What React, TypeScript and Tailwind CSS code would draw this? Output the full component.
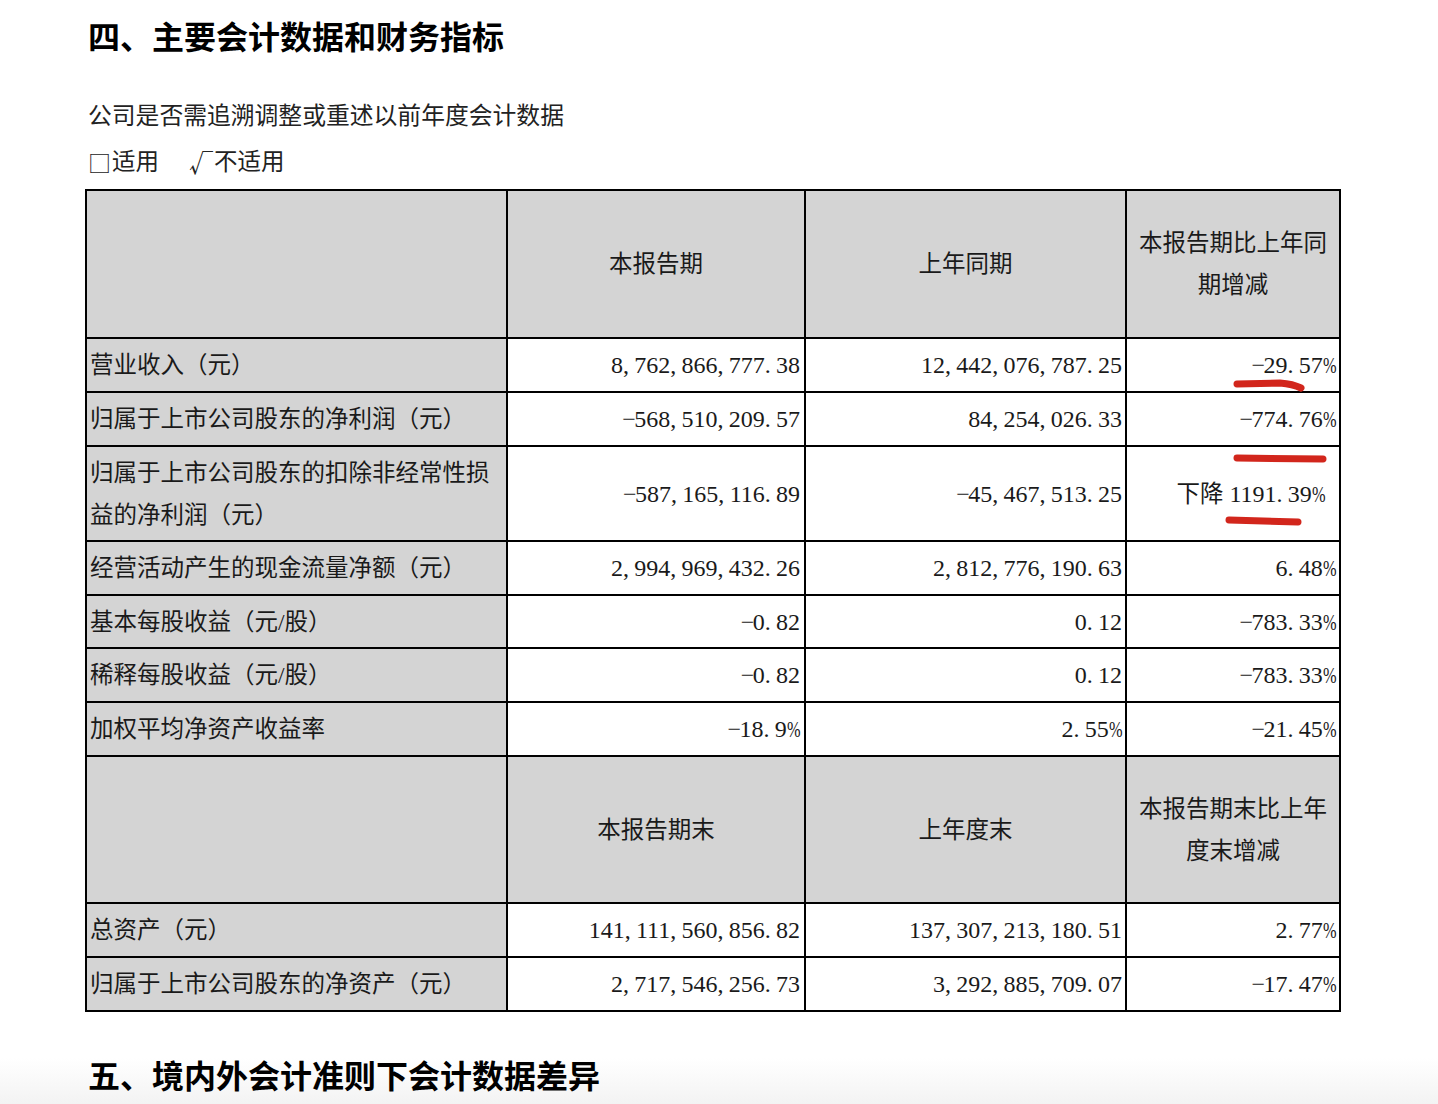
import React from "react";

const CJK = "font-['Liberation_Serif','Noto_Sans_CJK_SC',serif]";

function Num({ v }: { v: string }) {
  const parts = v.split("");
  return (
    <span className="font-['Liberation_Serif','Noto_Sans_CJK_SC',serif] whitespace-nowrap text-[24px]">
      {parts.map((c, i) => {
        if (c === "," || c === ".") {
          return (
            <span key={i} className="inline-block w-[0.47em] text-left">
              {c}
            </span>
          );
        }
        if (c === "-") {
          return (
            <span key={i} className="inline-block w-[0.5em] text-center">
              {"\u2212"}
            </span>
          );
        }
        if (c === "%") {
          return (
            <span key={i} className="inline-block w-[0.55em] overflow-visible">
              <span className="inline-block origin-left scale-x-[0.68]">%</span>
            </span>
          );
        }
        return <span key={i}>{c}</span>;
      })}
    </span>
  );
}

type Row = {
  label: React.ReactNode;
  a: string;
  b: string;
  c: React.ReactNode;
  h: string;
};

const rows1: Row[] = [
  { label: "营业收入（元）", a: "8,762,866,777.38", b: "12,442,076,787.25", c: <Num v="-29.57%" />, h: "h-[54px]" },
  { label: "归属于上市公司股东的净利润（元）", a: "-568,510,209.57", b: "84,254,026.33", c: <Num v="-774.76%" />, h: "h-[54px]" },
  {
    label: (
      <>
        归属于上市公司股东的扣除非经常性损
        <br />
        益的净利润（元）
      </>
    ),
    a: "-587,165,116.89",
    b: "-45,467,513.25",
    c: (
      <span className="pr-[11px]">
        <span className={CJK}>下降 </span>
        <Num v="1191.39%" />
      </span>
    ),
    h: "h-[95px]",
  },
  { label: "经营活动产生的现金流量净额（元）", a: "2,994,969,432.26", b: "2,812,776,190.63", c: <Num v="6.48%" />, h: "h-[54px]" },
  { label: "基本每股收益（元/股）", a: "-0.82", b: "0.12", c: <Num v="-783.33%" />, h: "h-[53px]" },
  { label: "稀释每股收益（元/股）", a: "-0.82", b: "0.12", c: <Num v="-783.33%" />, h: "h-[54px]" },
  { label: "加权平均净资产收益率", a: "-18.9%", b: "2.55%", c: <Num v="-21.45%" />, h: "h-[54px]" },
];

const rows2: Row[] = [
  { label: "总资产（元）", a: "141,111,560,856.82", b: "137,307,213,180.51", c: <Num v="2.77%" />, h: "h-[54px]" },
  { label: "归属于上市公司股东的净资产（元）", a: "2,717,546,256.73", b: "3,292,885,709.07", c: <Num v="-17.47%" />, h: "h-[54px]" },
];

function HeaderRow({ a, b, c, h }: { a: string; b: string; c: React.ReactNode; h: string }) {
  const cell = `border-l-2 border-t-2 border-black bg-[#d4d4d4] ${h} flex items-center justify-center text-center`;
  return (
    <>
      <div className={cell}></div>
      <div className={cell}>{a}</div>
      <div className={cell}>{b}</div>
      <div className={`${cell} leading-[42px]`}>{c}</div>
    </>
  );
}

function DataRow({ r }: { r: Row }) {
  const base = `border-l-2 border-t-2 border-black ${r.h} flex items-center`;
  return (
    <>
      <div className={`${base} bg-[#d4d4d4] pl-[3px] leading-[42px]`}>
        <span>{r.label}</span>
      </div>
      <div className={`${base} bg-white justify-end pr-[4px]`}>
        <Num v={r.a} />
      </div>
      <div className={`${base} bg-white justify-end pr-[3px]`}>
        <Num v={r.b} />
      </div>
      <div className={`${base} bg-white justify-end pr-[3px]`}>{r.c}</div>
    </>
  );
}

export default function App() {
  return (
    <div className={`relative w-[1438px] h-[1104px] overflow-hidden bg-white text-[#1a1a1a] ${CJK}`}>
      <div className="pl-[88px]">
        <h1 className="pt-[15px] h-[55px] text-[32px] leading-[40px] font-bold text-black font-['Noto_Sans_CJK_SC',sans-serif]">
          四、主要会计数据和财务指标
        </h1>
        <p className="mt-[45px] text-[23.8px] leading-[32px] text-[#222]">公司是否需追溯调整或重述以前年度会计数据</p>
        <p className="mt-[14px] text-[23.5px] leading-[32px] text-[#222] flex items-center">
          <span className="inline-flex items-center">
            <span className="font-['Noto_Sans_CJK_SC',sans-serif] text-[23px] leading-[32px] mr-[1px]">□</span>
            <span>适用</span>
          </span>
          <span className="ml-[30px] inline-flex items-center">
            <span className="font-['Noto_Sans_CJK_SC',sans-serif] text-[24px] leading-[32px] mr-[1px]">√</span>
            <span>不适用</span>
          </span>
        </p>
      </div>

      <div className="pl-[85px] mt-[11px]">
        <div className="grid grid-cols-[421px_298px_321px_214px] w-[1256px] border-r-2 border-b-2 border-black text-[23.5px] leading-[30px] text-[#1a1a1a]">
          <HeaderRow
            a="本报告期"
            b="上年同期"
            c={
              <span>
                本报告期比上年同
                <br />
                期增减
              </span>
            }
            h="h-[148px]"
          />
          {rows1.map((r, i) => (
            <DataRow key={i} r={r} />
          ))}
          <HeaderRow
            a="本报告期末"
            b="上年度末"
            c={
              <span>
                本报告期末比上年
                <br />
                度末增减
              </span>
            }
            h="h-[147px]"
          />
          {rows2.map((r, i) => (
            <DataRow key={i} r={r} />
          ))}
        </div>
      </div>

      <div className="h-[92px] bg-gradient-to-b from-white via-white to-[#f3f3f3] pl-[88px] pt-[42px]">
        <h2 className="text-[32px] leading-[40px] font-bold text-black font-['Noto_Sans_CJK_SC',sans-serif]">
          五、境内外会计准则下会计数据差异
        </h2>
      </div>

      <svg className="pointer-events-none absolute left-0 top-0" width="1438" height="1104" viewBox="0 0 1438 1104">
        <g fill="none" stroke="#d2261c" strokeLinecap="round" strokeWidth="7">
          <path d="M1237 384 L1280 383 Q1293 384 1301 388" />
          <path d="M1237 458 L1323 459" />
          <path d="M1229 520 L1298 522" />
        </g>
      </svg>
    </div>
  );
}
